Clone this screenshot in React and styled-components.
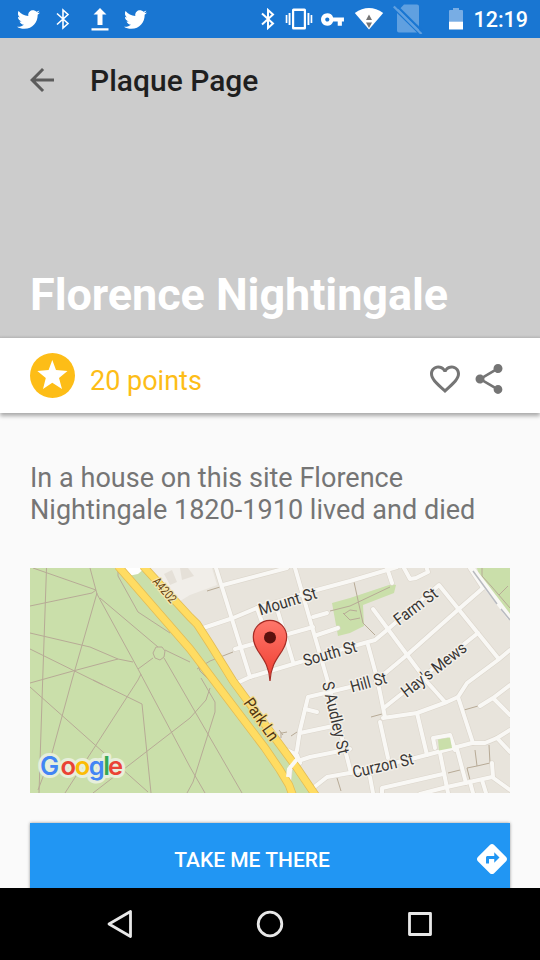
import React from "react";
import styled, { createGlobalStyle } from "styled-components";
import { FaTwitter } from "react-icons/fa";
import { MdArrowBack, MdFavoriteBorder, MdShare, MdDirections, MdVpnKey } from "react-icons/md";

const GlobalStyle = createGlobalStyle`
  * { box-sizing: border-box; }
  body { margin: 0; background: #fafafa; font-family: Roboto, "Noto Sans", sans-serif; }
  svg { display: block; flex: none; }
`;

const Screen = styled.div`
  display: flex;
  flex-direction: column;
  width: 540px;
  height: 960px;
  overflow: hidden;
  background: #fafafa;
`;

const StatusBar = styled.div`
  display: flex;
  align-items: center;
  flex: none;
  height: 38px;
  padding: 0 12px 0 16px;
  background: #1976d2;
  color: #fff;
`;

const StatusIcon = styled.span`
  display: flex;
  flex: none;
  justify-content: center;
  width: ${(p) => p.$width}px;
  margin-left: ${(p) => p.$gap || 0}px;
`;

const Clock = styled.span`
  margin-left: auto;
  padding-top: 2px;
  font-size: 21.5px;
  font-weight: 500;
  line-height: 36px;
  white-space: nowrap;
`;

const Hero = styled.header`
  display: flex;
  flex-direction: column;
  justify-content: space-between;
  flex: none;
  height: 300px;
  background: linear-gradient(#cccccc 297px, #b9b9b9 300px);
`;

const Toolbar = styled.div`
  display: flex;
  align-items: center;
  gap: 30px;
  height: 84px;
  padding-left: 24px;
  color: #5c5c5c;
`;

const PageTitle = styled.h1`
  margin: 2px 0 0;
  color: #1f1f1f;
  font-size: 30px;
  font-weight: 500;
  line-height: 40px;
`;

const PlaqueName = styled.h2`
  margin: 0;
  padding: 0 30px 16px;
  color: #fff;
  font-size: 45px;
  font-weight: 700;
  letter-spacing: -0.07px;
  line-height: 54px;
`;

const PointsBar = styled.div`
  display: flex;
  flex: none;
  align-items: flex-start;
  height: 75px;
  padding: 15px 33px 0 30px;
  background: #fff;
  box-shadow: 0 3px 4px rgba(0, 0, 0, 0.32);
`;

const Points = styled.span`
  flex: 1;
  margin: 8px 0 0 15px;
  color: #fdbd17;
  font-size: 27px;
  line-height: 40px;
`;

const Actions = styled.div`
  display: flex;
  gap: 8px;
  margin-top: 8px;
  color: #757575;
`;

const Content = styled.main`
  flex: 1;
  min-height: 0;
  overflow: hidden;
  padding: 49px 30px 0;
`;

const Inscription = styled.p`
  margin: 0 0 42px;
  color: #757575;
  font-size: 27px;
  letter-spacing: 0.03px;
  line-height: 32px;
`;

const MapCard = styled.div`
  height: 225px;
  margin-bottom: 30px;
`;

const RouteButton = styled.button`
  display: flex;
  align-items: center;
  width: 100%;
  height: 72px;
  padding: 0;
  border: 0;
  background: #2196f3;
  box-shadow: 0 0 3px rgba(0, 0, 0, 0.4);
  color: #fff;
  font: 500 21px Roboto, sans-serif;
`;

const ButtonLabel = styled.span`
  flex: 1;
  padding-top: 2px;
  text-align: center;
`;

const NavBar = styled.nav`
  display: flex;
  flex: none;
  align-items: center;
  justify-content: center;
  gap: 114px;
  height: 72px;
  background: #000;
`;

const MapLabel = styled.text`
  fill: ${(p) => p.$color || "#383634"};
  stroke: ${(p) => p.$halo || "#f3f0ea"};
  stroke-width: 3px;
  stroke-linejoin: round;
  paint-order: stroke;
  font-family: Roboto, sans-serif;
  font-size: ${(p) => p.$size || 16.5}px;
`;

const LogoText = styled.text`
  font-family: Inter, sans-serif;
  font-size: 25.5px;
  font-weight: 600;
  stroke: ${(p) => (p.$halo ? "#e7efdb" : "none")};
  stroke-width: 6px;
  stroke-linejoin: round;
`;

const Bluetooth = ({ weight }) => (
  <svg width="14" height="22" viewBox="0 0 14 22" fill="none" stroke="currentColor" strokeWidth={weight}>
    <path d="M1 5.5L12 15.5L7 20V2L12 6.5L1 16.5" />
  </svg>
);

const footpaths = [
  "M16.5 0L12.5 117L9 225", "M3 0L66 22", "M0 38L62 25L66 22", "M60 0L67 26L108 101L160 199L175 225",
  "M67 25L42 112L22 185L8 222", "M70 30L128 79", "M126 79L132 79L135 83L134 89L130 92L125 90L123 85Z",
  "M135 82L160 94", "M134 90L160 135L212 225", "M123 90L108 101", "M88 0V8L108 44L140 65",
  "M0 65L60 79L88 91L103 94", "M0 81L73 117", "M63 112L112 136L121 225", "M0 115L43 103L88 91", "M0 119L118 224",
  "M35 225L108 112L111 106", "M63 225L160 150L176 132L180 120", "M171 110L185 134V144L163 214L157 225",
  "M167 94L170 103L183 116", "M167 101L180 93L203 84", "M177 23L190 19", "M300 43L320 38L360 19",
  "M324 14L333 55L345 67", "M313 45L320 52L330 50M314 46L320 42L327 43", "M253 167L249 162M252 165L257 164M251 164V170M261 168L267 164",
  "M445 182L447 198L460 195L459 177M447 198L437 200L440 212M418 205L430 202", "M434 142L448 138",
  "M341 149L352 146", "M452 0V8L462 19L480 40M469 27L478 18", "M307 210L311 223",
];

const streets = [
  "M186 0L220 109", "M193 17L257 0", "M173 60L203 50L227 40L283 23L320 13L367 -1", "M265 0L298 114L312 170L321 205",
  "M227 40L233 57L238 75", "M248 44L263 94", "M205 81L283 59", "M283 49L297 45", "M287 67L308 60",
  "M207 115L220 109L270 94L320 79L345 72L357 62L409 17L468 90", "M343 41L398 115L415 134",
  "M453 20L430 40L377 87L353 107L346 113", "M438 -3L453 20", "M448 65L355 139",
  "M480 82L468 92L437 115L428 129L417 134L387 145L353 150", "M338 77L347 110L355 149", "M350 154L358 190",
  "M387 145L397 187", "M385 190L442 175L455 175L467 170L480 162", "M268 193L280 189L320 181",
  "M283 220L297 209L325 204L385 190", "M428 129L443 175", "M450 138L463 130L480 117M463 130L480 147", "M467 170L480 184",
  "M405 180L403 170L420 167L425 182", "M410 185L418 225", "M427 181L436 215", "M352 225V220L413 206",
  "M390 226L417 219L462 209L480 222", "M462 195L463 209", "M440 214L443 225M452 212L456 225", "M340 209L343 225",
  "M320 119L278 129L270 162L267 182L260 202L259 212", "M275 141L287 144", "M270 165L303 158", "M257 182L267 187L270 195",
  "M357 0L362 15", "M374 0L380 11L386 10L398 4L396 -2",
];

const motorways = [
  "M88 -2L160 81L185 114L235 180L250 202L259 217L263 228",
  "M113 -2L160 49L167 56L180 76L203 113L267 200L286 228",
];

const labels = [
  { text: "Mount St", x: 230.5, y: 47.5, angle: -17, length: 60 },
  { text: "South St", x: 275, y: 98.5, angle: -16, length: 55 },
  { text: "Farm St", x: 369, y: 58, angle: -37, length: 50 },
  { text: "Hill St", x: 322, y: 124.5, angle: -15, length: 37 },
  { text: "Hay's Mews", x: 376.5, y: 130, angle: -38, length: 78 },
  { text: "S Audley St", x: 292, y: 115, angle: 77, length: 74 },
  { text: "Curzon St", x: 324, y: 210, angle: -13, length: 62 },
  { text: "Park Ln", x: 213, y: 135, angle: 55, length: 48, color: "#52350f", halo: "#f3dd8c" },
  { text: "A4202", x: 122, y: 14, angle: 49, length: 29, size: 12.5, color: "#66410f", halo: "#f3e6ae" },
];

const logoLetters = (
  <>
    <tspan x="10" fill="#4285f4">G</tspan>
    <tspan x="30.5" fill="#ea4335">o</tspan>
    <tspan x="44.7" fill="#fbbc05">o</tspan>
    <tspan x="58.8" fill="#4285f4">g</tspan>
    <tspan x="73.2" fill="#34a853">l</tspan>
    <tspan x="78" fill="#ea4335">e</tspan>
  </>
);

const StreetMap = () => (
  <svg width="480" height="225" viewBox="0 0 480 225">
    <defs>
      <linearGradient id="pinFill" x1="0" y1="0" x2="0" y2="1">
        <stop offset="0" stopColor="#ff776b" />
        <stop offset="1" stopColor="#ee3c2f" />
      </linearGradient>
    </defs>
    <rect width="480" height="225" fill="#e8e4dc" />
    <path d="M117 0H182L187 17L160 27L150 33Z" fill="#f1eee9" />
    <path d="M134 6L142 2L147 14L140 17ZM150 0H158L164 8L152 12Z" fill="#e5e0d8" />
    <path d="M0 0H90L115 0L160 50L203 114L267 200L285 225H0Z" fill="#cadfaa" />
    <path d="M95 0H115L108 6L98 8Z" fill="#fff" />
    <path d="M302 35L320 30L362 16L366 17L364 25L333 37L334 58L320 65L308 68Z" fill="#cadfaa" />
    <path d="M447 0H480V47L450 12Z" fill="#cadfaa" />
    <g fill="none" stroke="#b7aa96" strokeWidth="1">
      {footpaths.map((d) => <path key={d} d={d} />)}
    </g>
    <g fill="none" stroke="#dcd6cc" strokeWidth="5.2" strokeLinecap="round" strokeLinejoin="round">
      {streets.map((d) => <path key={d} d={d} />)}
    </g>
    <g fill="none" stroke="#f9f8f5" strokeWidth="4" strokeLinecap="round" strokeLinejoin="round">
      {streets.map((d) => <path key={d} d={d} />)}
    </g>
    <path d="M408 171.5L420 169.5L422 180L409 182.5Z" fill="#cadfaa" />
    <path d="M442 0L480 50" fill="none" stroke="#f9f8f5" strokeWidth="5" />
    <path d="M443 3L467 36M471 41L480 52" fill="none" stroke="#b9bbc0" strokeWidth="1.5" />
    <g fill="none" stroke="#e2bd58" strokeWidth="8.4">
      {motorways.map((d) => <path key={d} d={d} />)}
    </g>
    <g fill="none" stroke="#ffdc62" strokeWidth="6.8">
      {motorways.map((d) => <path key={d} d={d} />)}
    </g>
    <path d="M268 190L259 201L258 209" fill="none" stroke="#f9f8f5" strokeWidth="4" />
    {labels.map((l) => (
      <MapLabel
        key={l.text}
        transform={`translate(${l.x} ${l.y}) rotate(${l.angle})`}
        textLength={l.length}
        lengthAdjust="spacingAndGlyphs"
        $color={l.color}
        $halo={l.halo}
        $size={l.size}
      >
        {l.text}
      </MapLabel>
    ))}
    <path
      d="M240 113C239 98 234 92 228 83C225 78 223.3 74 223.3 69A16.7 16.7 0 0 1 256.7 69C256.7 74 255 78 252 83C246 92 241 98 240 113Z"
      fill="url(#pinFill)" stroke="#a52c25" strokeWidth="1.2"
    />
    <circle cx="240" cy="69.5" r="6" fill="#5b110e" />
    <LogoText $halo y="206.5">{logoLetters}</LogoText>
    <LogoText y="206.5">{logoLetters}</LogoText>
  </svg>
);

export default function App() {
  return (
    <Screen>
      <GlobalStyle />
      <StatusBar>
        <StatusIcon $width={24}><FaTwitter size={23} /></StatusIcon>
        <StatusIcon $width={14} $gap={16}><Bluetooth weight={1.6} /></StatusIcon>
        <StatusIcon $width={18} $gap={21}>
          <svg width="18" height="24" viewBox="0 0 18 24" fill="currentColor">
            <path d="M9 1L15.5 7.5H11.5V18H6.5V7.5H2.5ZM.5 21.3H17.5V23.6H.5Z" />
          </svg>
        </StatusIcon>
        <StatusIcon $width={23} $gap={15}><FaTwitter size={23} /></StatusIcon>
        <StatusIcon $width={14} $gap={114}><Bluetooth weight={2} /></StatusIcon>
        <StatusIcon $width={28} $gap={10}>
          <svg width="28" height="22" viewBox="0 0 28 22" fill="currentColor">
            <path fillRule="evenodd" d="M8.5 .5H19.5Q21 .5 21 2V20Q21 21.5 19.5 21.5H8.5Q7 21.5 7 20V2Q7 .5 8.5 .5ZM9.2 3V19H18.8V3Z" />
            <path d="M.7 7H2.4V15H.7ZM3.6 5H5.5V17H3.6ZM22.5 5H24.4V17H22.5ZM25.6 7H27.3V15H25.6Z" />
          </svg>
        </StatusIcon>
        <StatusIcon $width={26} $gap={6}><MdVpnKey size={25} /></StatusIcon>
        <StatusIcon $width={30} $gap={9}>
          <svg width="30" height="22" viewBox="0 0 30 22">
            <path d="M.8 5Q15 -5 29.2 5L15 21.5Z" fill="#fff" />
            <path d="M15 6.5L18 12H12ZM12 14.5H18L15 20Z" fill="#757575" />
          </svg>
        </StatusIcon>
        <StatusIcon $width={30} $gap={9}>
          <svg width="30" height="30" viewBox="0 0 30 30">
            <path d="M11 .5H24Q26 .5 26 2.5V21.7L5.5 6.2ZM4 9L24 28.5H6Q4 28.5 4 26.5Z" fill="#60a0e0" />
            <path d="M4 5.7L26 27.2V21.7L8 4Z" fill="#60a0e0" />
            <path d="M2.6 .8L30 28" stroke="#1976d2" strokeWidth="2.2" />
            <path d="M.8 2.5L28.5 30" stroke="#60a0e0" strokeWidth="2.3" />
          </svg>
        </StatusIcon>
        <StatusIcon $width={14} $gap={26}>
          <svg width="14" height="22" viewBox="0 0 14 22">
            <path d="M4 0H10V2H13Q14 2 14 3V14H0V3Q0 2 1 2H4Z" fill="#78ade4" />
            <path d="M0 13.7H14V21.5H0Z" fill="#fff" />
          </svg>
        </StatusIcon>
        <Clock>12:19</Clock>
      </StatusBar>
      <Hero>
        <Toolbar>
          <MdArrowBack size={36} />
          <PageTitle>Plaque Page</PageTitle>
        </Toolbar>
        <PlaqueName>Florence Nightingale</PlaqueName>
      </Hero>
      <PointsBar>
        <svg width="45" height="45" viewBox="0 0 45 45">
          <circle cx="22.5" cy="22.5" r="22.5" fill="#fdbd17" />
          <path d="M22.3 7L26 17L37.5 18L29 25L32 36L22.3 29.8L13 36L15.8 25L7.3 18L18.6 17Z" fill="#fff" />
        </svg>
        <Points>20 points</Points>
        <Actions>
          <MdFavoriteBorder size={36} />
          <MdShare size={36} />
        </Actions>
      </PointsBar>
      <Content>
        <Inscription>In a house on this site Florence Nightingale 1820-1910 lived and died</Inscription>
        <MapCard><StreetMap /></MapCard>
        <RouteButton>
          <ButtonLabel>TAKE ME THERE</ButtonLabel>
          <MdDirections size={36} />
        </RouteButton>
      </Content>
      <NavBar>
        <svg width="36" height="36" viewBox="0 0 36 36" fill="none" stroke="#e8e8e8" strokeWidth="2.8" strokeLinejoin="round">
          <path d="M28.5 5.5V30.5L7 18Z" />
        </svg>
        <svg width="36" height="36" viewBox="0 0 36 36" fill="none" stroke="#e8e8e8" strokeWidth="2.8">
          <circle cx="18" cy="18" r="11.8" />
        </svg>
        <svg width="36" height="36" viewBox="0 0 36 36" fill="none" stroke="#e8e8e8" strokeWidth="2.8" strokeLinejoin="round">
          <rect x="7.5" y="7.5" width="21" height="21" />
        </svg>
      </NavBar>
    </Screen>
  );
}
